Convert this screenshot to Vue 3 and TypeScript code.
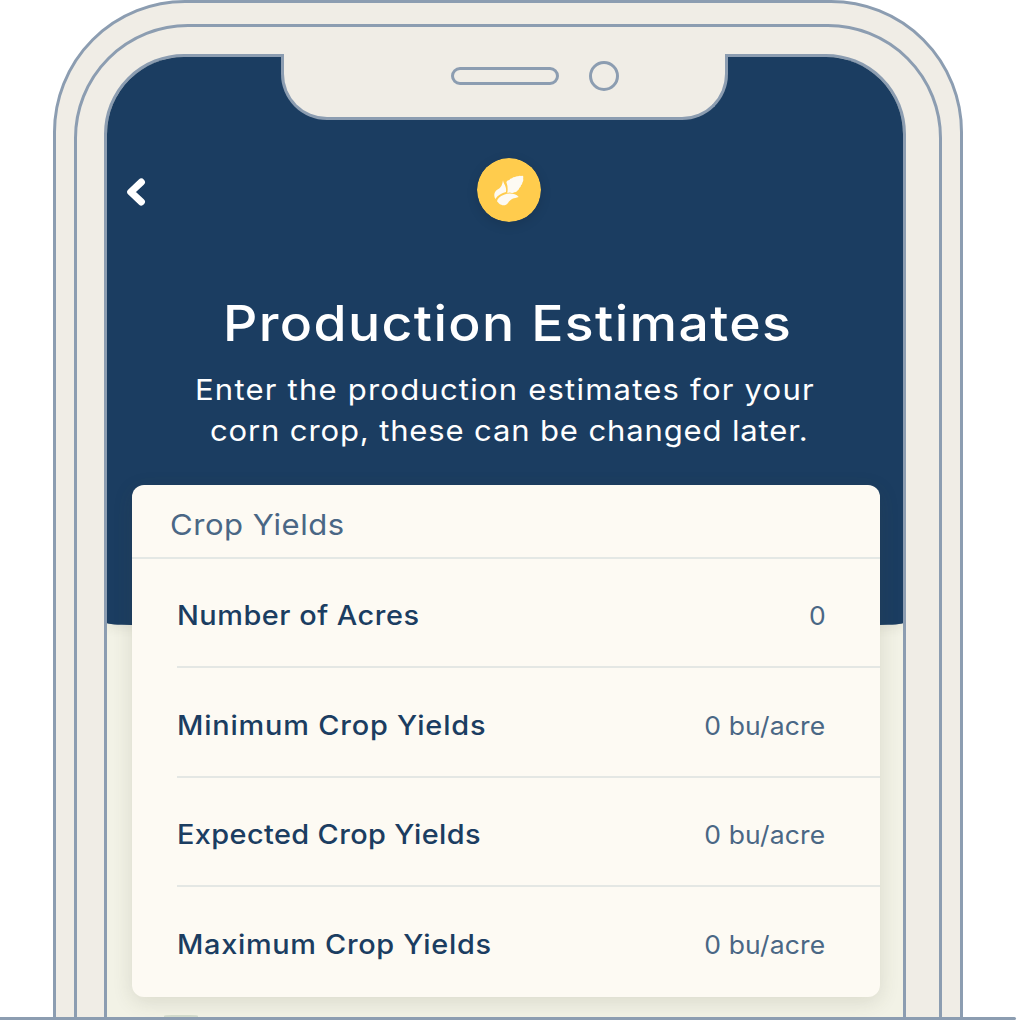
<script setup lang="ts">
interface YieldRow {
  label: string
  value: string
  spacing: number
}

const rows: YieldRow[] = [
  { label: 'Number of Acres', value: '0', spacing: 0.48 },
  { label: 'Minimum Crop Yields', value: '0 bu/acre', spacing: 0.76 },
  { label: 'Expected Crop Yields', value: '0 bu/acre', spacing: 0.36 },
  { label: 'Maximum Crop Yields', value: '0 bu/acre', spacing: 0.64 },
]
</script>

<template>
  <main class="stage">
    <div class="phone">
      <div class="bezel">
        <div class="screen">
          <header class="hero">
            <nav class="topbar">
              <svg class="back" viewBox="0 0 20 30" aria-label="Back">
                <path d="M15.3 5.1 4.8 15l10.5 9.9" />
              </svg>
              <svg class="crop-badge" viewBox="51 39 192 192" aria-label="Corn">
                <circle cx="147" cy="135" r="96" fill="#ffcc4d" />
                <g fill="#fdfaf3">
                  <path d="M139 111q3-6 9-6 2-4 8-5 3-4 9-4 4-3 9-2 5-3 9-1 7-2 7 3-1 5 0 9 0 4-3 8 0 5-4 8 0 5-5 8-1 5-6 8-3 5-9 5-5 3-10 1-6-1-11 1 3-17-3-33Z" />
                  <path d="M129 106c1 11 12 18 9 35-13 3-24 9-32 21-6-12-3-23 8-29 11-6 13-16 15-27Z" />
                  <path d="M176 156c-10-12-31-12-44-7-13 5-20 12-21 20 4 3 6 10 13 10 6 4 15 2 20-5 8-13 18-14 32-18Z" />
                </g>
              </svg>
            </nav>
            <h1>Production Estimates</h1>
            <p class="lead first">Enter the production estimates for your</p>
            <p class="lead second">corn crop, these can be changed later.</p>
          </header>

          <section class="card">
            <h2><span>Crop Yields</span></h2>
            <ul>
              <li v-for="row in rows" :key="row.label">
                <span class="label" :style="{ letterSpacing: row.spacing + 'px' }">{{ row.label }}</span>
                <span class="value">{{ row.value }}</span>
              </li>
            </ul>
          </section>
          <div class="next-peek"></div>
        </div>
      </div>
    </div>
    <div class="notch">
      <span class="speaker"></span>
      <span class="camera"></span>
    </div>
    <div class="ground"></div>
  </main>
</template>

<style>
body {
  margin: 0;
  background: #fff;
  overflow: hidden;
}
</style>

<style scoped>
* {
  box-sizing: border-box;
}

.stage {
  --line: #8c9db1;
  --shell: #f0ede6;
  --navy: #1b3d61;
  position: relative;
  width: 1017px;
  height: 1020px;
  overflow: hidden;
  font-family: Inter, sans-serif;
}

.phone {
  width: 909.7px;
  height: 1100px;
  margin-left: 53px;
  padding: 21px 18px 0;
  border: 3px solid var(--line);
  border-radius: 132px 132px 0 0;
  background: var(--shell);
}

.bezel {
  width: 867.7px;
  height: 1076px;
  padding: 27px 27px 0;
  border: 3px solid var(--line);
  border-radius: 114px 114px 0 0;
}

.screen {
  width: 801.7px;
  height: 1046px;
  border: 3px solid var(--line);
  border-radius: 80px 80px 0 0;
  background: #f2f2e6;
  overflow: hidden;
}

.hero {
  height: 567.5px;
  background: var(--navy);
  border-radius: 0 0 24px 24px / 0 0 2px 2px;
  box-shadow: 0 3px 12px rgba(60, 60, 40, 0.09);
  color: #fff;
}

.topbar {
  display: flex;
  align-items: flex-start;
  height: 236px;
  padding: 101px 0 0 19px;
}

.back {
  width: 20px;
  height: 30px;
  margin-top: 19px;
  fill: none;
  stroke: #fff;
  stroke-width: 7.2;
  stroke-linecap: round;
  stroke-linejoin: round;
}

.crop-badge {
  width: 64px;
  height: 64px;
  margin-left: 331px;
  border-radius: 50%;
  box-shadow: 0 3px 12px rgba(0, 0, 0, 0.12);
}

/* Wide, geometric letter proportions */
h1,
.lead,
h2 span,
.label {
  transform: scaleX(1.07);
  transform-origin: left center;
}

h1 {
  margin: 0 0 16px 115.5px;
  font-size: 50px;
  font-weight: 500;
  line-height: 60px;
  letter-spacing: 1.3px;
  white-space: nowrap;
}

.lead {
  margin: 0;
  font-size: 29px;
  font-weight: 400;
  line-height: 41.3px;
  white-space: nowrap;
}

.first {
  margin-left: 88px;
  letter-spacing: 1.13px;
}

.second {
  margin-left: 103px;
  letter-spacing: 0.8px;
}

.card {
  position: relative;
  width: 748.5px;
  height: 512px;
  margin: -139.5px 0 0 24.5px;
  border-radius: 12px;
  background: #fdfaf3;
  box-shadow: 0 5px 20px rgba(70, 70, 40, 0.14);
}

h2 {
  height: 74px;
  margin: 0;
  padding: 4px 0 0 38px;
  border-bottom: 2px solid #e4e8e5;
  color: #4a6785;
  font-size: 29px;
  font-weight: 400;
  line-height: 72px;
  letter-spacing: 0.5px;
}

h2 span {
  display: inline-block;
}

ul {
  margin: 0 0 0 45.5px;
  padding: 0;
  list-style: none;
}

li {
  display: flex;
  align-items: baseline;
  justify-content: space-between;
  height: 109.7px;
  padding: 3.5px 54.5px 0 0;
  border-bottom: 2px solid #e4e7e4;
  line-height: 107px;
  white-space: nowrap;
}

li:first-child {
  height: 109px;
  padding-top: 3px;
}

li:last-child {
  border-bottom: 0;
}

.label {
  color: var(--navy);
  font-size: 27px;
  font-weight: 500;
}

.value {
  color: #4a6785;
  font-size: 25px;
  font-weight: 400;
  letter-spacing: 0.15px;
  transform: scaleX(1.06);
  transform-origin: right center;
}

.next-peek {
  width: 34px;
  height: 10px;
  margin: 18px 0 0 57px;
  border-radius: 8px 8px 0 0 / 1px 1px 0 0;
  background: #d4dccd;
}

.notch {
  position: absolute;
  top: 54px;
  left: 281px;
  display: flex;
  align-items: center;
  width: 447px;
  height: 66px;
  padding: 0 0 18.5px 167px;
  border: solid var(--line);
  border-width: 0 3px 3px;
  border-radius: 0 0 46px 46px;
  background: var(--shell);
}

.speaker {
  width: 108px;
  height: 18px;
  border: 3px solid var(--line);
  border-radius: 10px;
}

.camera {
  width: 30px;
  height: 30px;
  margin-left: 30px;
  border: 3px solid var(--line);
  border-radius: 50%;
}

.ground {
  position: absolute;
  left: 0;
  bottom: 0;
  width: 1016.3px;
  height: 3px;
  border-radius: 0 2px 2px 0;
  background: var(--line);
}
</style>
